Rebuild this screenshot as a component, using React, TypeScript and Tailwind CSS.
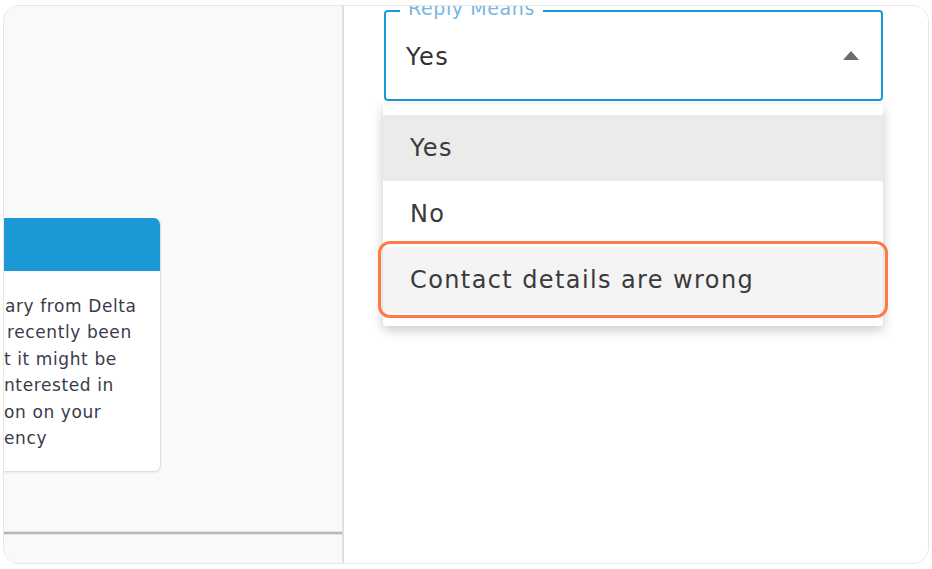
const cardLines: [string, string][] = [
  ["ary from Delta", "pl-[1px]"],
  ["recently been", "pl-[3px]"],
  ["t it might be", "pl-0"],
  ["nterested in", "pl-0"],
  ["on on your", "pl-0"],
  ["ency", "pl-0"],
];

const options = ["Yes", "No", "Contact details are wrong"];

function LeftPanel() {
  return (
    <div className="w-[340px] shrink-0 bg-[#f9f9f9] border-r-2 border-[#dedede] flex flex-col">
      <div className="mt-[212px] w-[157px] rounded-r-[7px] overflow-hidden border-r border-b border-[#cfe3f0] bg-white shadow-[0_1px_2px_rgba(0,0,0,0.06)]">
        <div className="h-[53px] bg-[#1b98d5]" />
        <div className="pt-[22px] pb-[20px] text-[17px] leading-[26.4px] tracking-[0.6px] text-[#3b3a4a] whitespace-nowrap">
          {cardLines.map(([t, pad]) => (
            <div key={t} className={pad}>
              {t}
            </div>
          ))}
        </div>
      </div>
      <div className="flex-1" />
      <div className="h-[4px] border-y border-[#e4e4e6] bg-[#b7b7bb]" />
      <div className="h-[28px]" />
    </div>
  );
}

function ReplySelect() {
  return (
    <div className="relative ml-[40px] mt-[4px] w-[499px]">
      <div className="relative h-[91px] rounded-[4px] border-2 border-[#1b98d5] flex items-center pl-[20px] pr-[22px] pt-[3px]">
        <span className="absolute left-[14px] -top-[16px] bg-white px-[8px] text-[19px] leading-[24px] tracking-[0.6px] text-[#7ab6e2]">
          Reply Means
        </span>
        <span className="flex-1 text-[24px] tracking-[1.5px] text-[#333333]">Yes</span>
        <svg width="16" height="9" viewBox="0 0 16 9" className="mb-[4px]">
          <path d="M8 0 L16 9 L0 9 Z" fill="#6b6b6b" />
        </svg>
      </div>

      <div className="absolute left-[-1px] top-[94px] w-[500px] bg-white pt-[11px] pb-[13px] shadow-[0_4px_12px_rgba(0,0,0,0.22)] rounded-[3px]">
        {options.map((o, i) => (
          <div
            key={o}
            className={
              "h-[66px] flex items-center pl-[27px] text-[24px] tracking-[1.4px] text-[#3a3a3a] " +
              (i === 0 ? "bg-[#ebebeb]" : i === 2 ? "bg-[#f4f4f4]" : "bg-white")
            }
          >
            {o}
          </div>
        ))}
        <div className="absolute left-[-5px] right-[-5px] top-[137px] h-[77px] rounded-[12px] border-[3px] border-[#ff7a45]" />
      </div>
    </div>
  );
}

export default function App() {
  return (
    <div
      className="w-[932px] h-[569px] bg-white pt-[5px] pl-[3px]"
      style={{ fontFamily: '"DejaVu Sans", "Noto Sans", sans-serif' }}
    >
      <div className="w-[926px] h-[559px] rounded-[16px] border border-[#e6e6e6] overflow-hidden flex">
        <LeftPanel />
        <div className="flex-1 bg-white">
          <ReplySelect />
        </div>
      </div>
    </div>
  );
}
